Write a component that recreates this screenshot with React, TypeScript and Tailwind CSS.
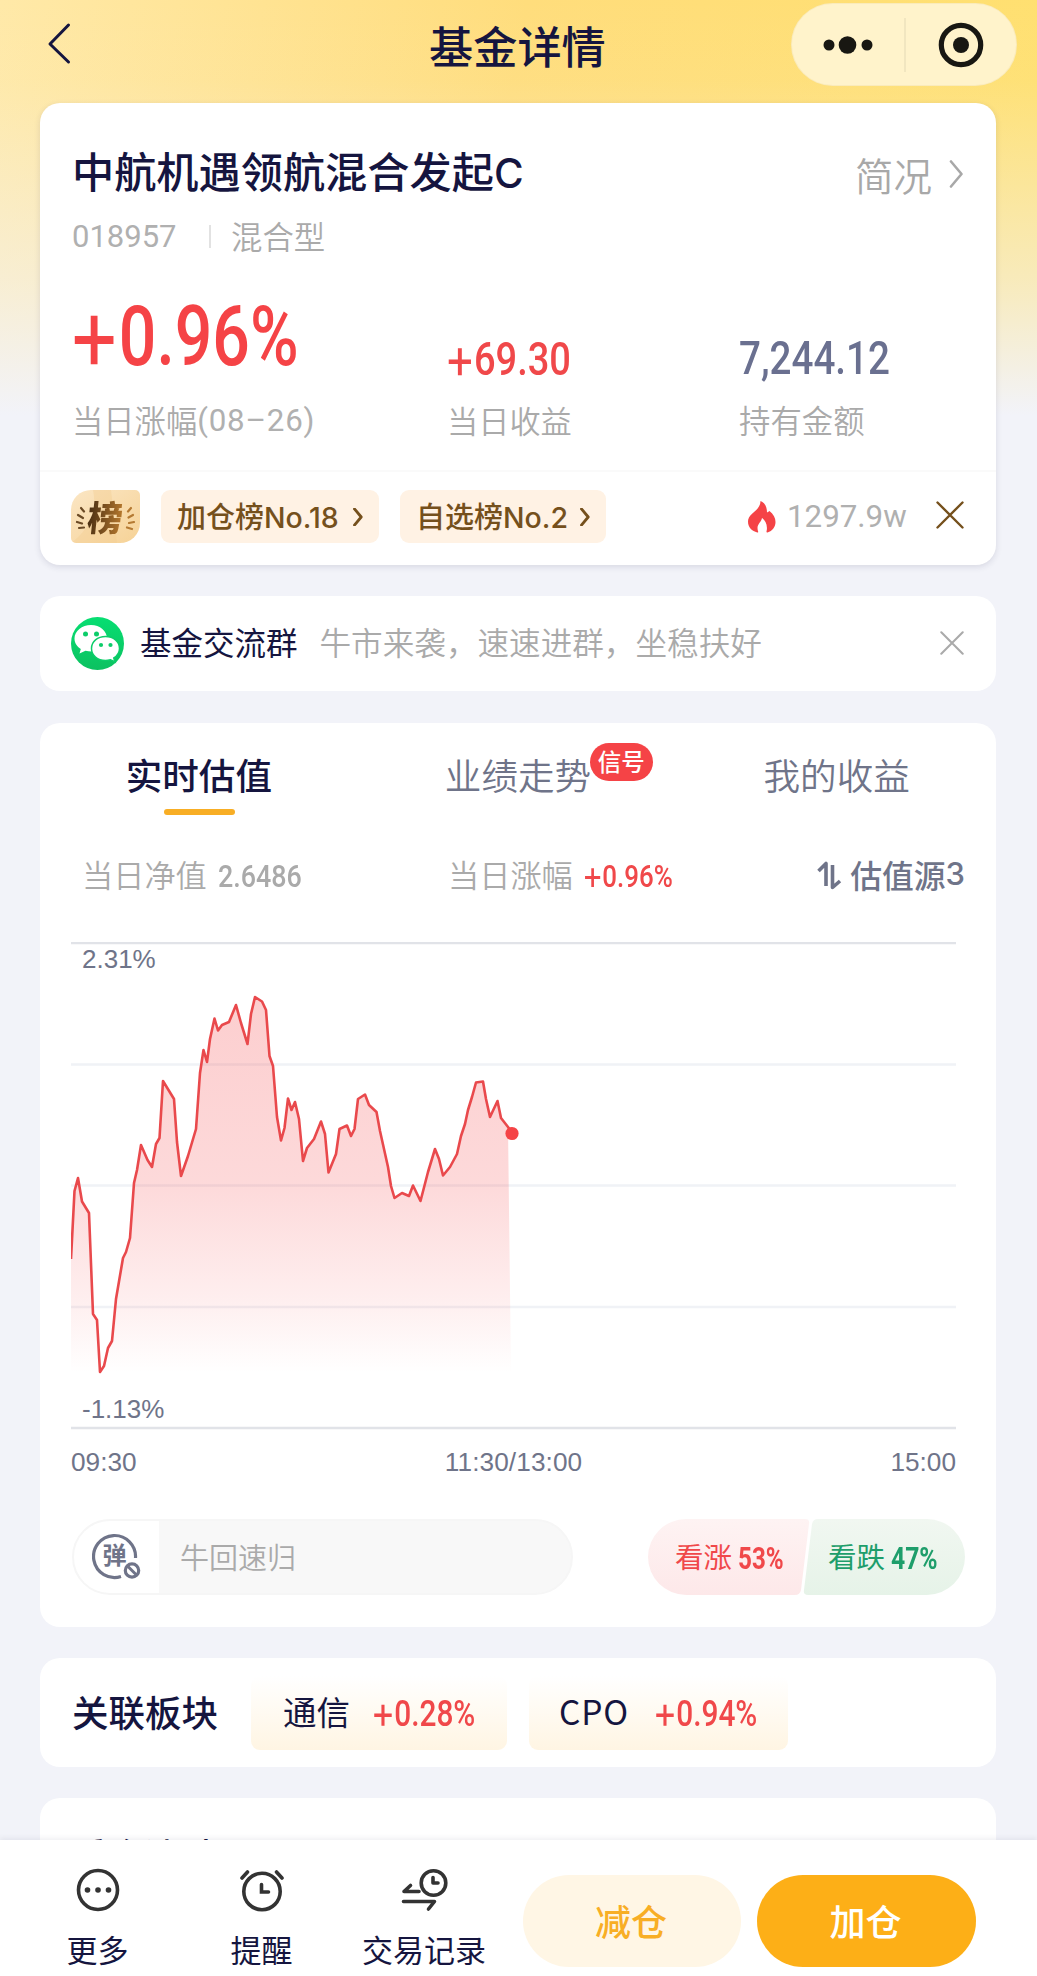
import React from "react";

const CJK = "font-['Noto_Sans_CJK_SC',sans-serif]";

const points: [number, number][] = [
  [0, 316], [3.5, 248], [7, 235], [11, 258.5], [18, 270], [22, 371], [26, 377], [29, 429], [33, 423], [37, 405],
  [41, 398], [45, 356], [52, 315], [55, 309], [59, 295], [63, 240], [66, 227], [70, 202], [76.5, 217], [81, 224],
  [85, 201], [88.5, 195], [92, 138], [103, 156], [106, 199], [110, 233], [117, 213], [125, 186], [129, 130],
  [132.5, 107], [136, 119], [139, 96], [143.5, 75.5], [147, 87.5], [151, 82], [158, 79], [165, 62], [170, 80],
  [176.5, 101], [180, 71], [184, 54], [191, 58.5], [195, 67], [198.5, 113], [202, 123], [206, 174], [210, 197.5],
  [213.5, 185], [217, 155.5], [220.5, 167], [224, 159], [228, 176], [232, 218], [236, 205], [243, 196],
  [250, 178.5], [254, 191], [257.5, 229.5], [265, 211], [268.5, 186], [276, 182.5], [280, 193], [283.5, 186],
  [287, 156], [294, 151.5], [298, 162], [305.5, 169], [309, 188], [317, 224], [320, 243], [323.5, 255],
  [331, 250], [338, 253], [342, 242.5], [349.5, 258], [357, 229], [364, 206], [368, 216], [372, 232.5],
  [379, 224], [386, 211], [390, 193], [394, 181], [397, 167], [401, 154], [405, 139.5], [412, 138.5],
  [415, 156], [419, 174], [426.5, 158], [430, 175], [437, 184],
];
const line = points.map(([x, y], i) => `${i ? "L" : "M"}${x} ${y}`).join("");

function Num({ children, size, color, width, weight = "font-medium" }: { children: string; size: string; color: string; width: number; weight?: string }) {
  const ref = React.useRef<HTMLSpanElement>(null);
  const [scale, setScale] = React.useState(0.83);
  React.useLayoutEffect(() => {
    if (ref.current) setScale(width / ref.current.offsetWidth);
  }, [width]);
  const signed = children.startsWith("+");
  return (
    <span className="inline-block shrink-0" style={{ width }}>
      <span ref={ref} className={`inline-block origin-left whitespace-nowrap font-[Roboto,sans-serif] ${weight} ${size} ${color}`} style={{ transform: `scaleX(${scale})` }}>
        {signed && <span className="relative top-[0.045em] -ml-[0.06em] font-[Inter] text-[1.24em] font-normal leading-none tracking-[-0.03em]">+</span>}
        {signed ? children.slice(1) : children}
      </span>
    </span>
  );
}

function Cross({ className, width = 2.4 }: { className: string; width?: number }) {
  return (
    <svg className={className} viewBox="0 0 28 28" fill="none" stroke="currentColor" strokeWidth={width} strokeLinecap="round">
      <path d="M1.5 1.5l25 25M26.5 1.5l-25 25" />
    </svg>
  );
}

function Chevron({ className, width = 3 }: { className: string; width?: number }) {
  return (
    <svg className={className} viewBox="0 0 14 28" fill="none" stroke="currentColor" strokeWidth={width} strokeLinecap="round" strokeLinejoin="round">
      <path d="M1.5 1.5L12 14L1.5 26.5" />
    </svg>
  );
}

function Header() {
  return (
    <header className="flex h-[103px] pl-[46px]">
      <svg className="mt-[22px] h-[44px] w-[26px] text-[#15153f]" viewBox="0 0 26 44" fill="none" stroke="currentColor" strokeWidth="3" strokeLinecap="round" strokeLinejoin="round">
        <path d="M22.500 3L4 22L22.500 40" />
      </svg>
      <h1 className="ml-[357px] mt-[13px] w-[176px] whitespace-nowrap text-[44.2px] font-medium leading-[64px] text-[#15153f]">基金详情</h1>
      <div className="ml-[186px] mt-[3px] flex h-[83px] w-[226px] items-center rounded-full border border-[#f6e6b0]/60 bg-[#fff3cb]">
        <svg className="h-[60px] w-[223px]" viewBox="0 0 223 60" fill="#181712">
          <circle cx="37" cy="30" r="5.500" />
          <circle cx="55.500" cy="30" r="8.800" />
          <circle cx="75" cy="30" r="5.500" />
          <path d="M113 3v54" stroke="#ece2bd" strokeWidth="1.500" />
          <circle cx="169" cy="30" r="19.700" fill="none" stroke="#181712" strokeWidth="5.200" />
          <circle cx="169" cy="30" r="8" />
        </svg>
      </div>
    </header>
  );
}

function RankBadge() {
  return (
    <div className="relative flex h-[53px] w-[69px] items-center justify-center overflow-hidden rounded-bl-[5px] rounded-br-[20px] rounded-tl-[20px] rounded-tr-[5px] bg-gradient-to-br from-[#fbe6c4] to-[#f6d296]">
      <svg className="absolute inset-0 h-full w-full" viewBox="0 0 69 53" fill="none" strokeLinecap="round" strokeWidth="2.2">
        <path d="M22 0h18L46 53H0C16 42 27 22 22 0z" fill="#f3cd90" opacity=".4" />
        <path d="M10 18l3 3.500M7 25l5 3M6 32l5 1.500M8 38l5-.5" stroke="#6b4a25" />
        <path d="M60 18l-3 3.500M62 25l-4.500 2.500M63 32l-5 1M61 39l-5-1.500" stroke="#b57a33" />
      </svg>
      <span className="relative -mt-[3px] -skew-x-6 bg-gradient-to-r from-[#4a2f12] to-[#b87a2e] bg-clip-text text-[35px] font-black leading-[53px] text-transparent">榜</span>
    </div>
  );
}

function RankChip({ label, no, className }: { label: string; no: string; className: string }) {
  return (
    <div className={`flex h-[53px] items-center rounded-[9px] bg-[#fff2e4] pl-4 text-[#75501c] ${className}`}>
      <span className="-mt-[1px] whitespace-nowrap text-[29px] font-medium leading-[53px]">
        {label}
        <span className="font-[Inter] text-[28.500px]">{no}</span>
      </span>
      <Chevron className="ml-auto h-[18px] w-[12px]" width={4.4} />
    </div>
  );
}

function FundCard() {
  return (
    <section className="h-[462px] rounded-[20px] bg-white shadow-[0_2px_6px_rgba(40,40,80,0.13)]">
      <div className="flex h-[367px] flex-col pl-[32px] pr-[32px]">
        <div className="mt-[39px] flex h-[60px] items-center justify-between">
          <h2 className="whitespace-nowrap text-[42.200px] font-medium leading-[60px] text-[#15153f]">中航机遇领航混合发起<span className="font-[Inter] text-[40.500px]">C</span></h2>
          <div className="mt-[4px] flex items-center text-[#a8a8a8]">
            <span className="text-[38.500px] font-[350] leading-[60px]">简况</span>
            <Chevron className="ml-[17px] h-[28px] w-[15px]" width={2.600} />
          </div>
        </div>
        <div className="mt-[10px] flex h-[48px] items-center text-[#aaaaaa]">
          <span className="mt-[2px] w-[105px] font-[Roboto] text-[31px] leading-[48px] text-[#b0b0b0]">018957</span>
          <span className="ml-[32px] h-[23px] w-[2px] bg-[#e2e2e2]" />
          <span className="ml-[20px] text-[31.400px] font-[350] leading-[48px]">混合型</span>
        </div>
        <div className="flex h-[210px]">
          <div className="w-[375px] pt-[20px]">
            <div className="flex h-[106px] items-center"><Num size="text-[83px] leading-[106px]" color="text-[#f54346]" width={227}>+0.96%</Num></div>
            <div className="mt-[10px] flex whitespace-nowrap text-[31.300px] font-[350] leading-[48px] text-[#aaaaaa]">当日涨幅<span className="mt-[1px] font-[Roboto] font-normal tracking-[0.8px] text-[#b0b0b0]">(08–26)</span></div>
          </div>
          <div className="w-[292px] pt-[67px]">
            <div className="flex h-[62px] items-center"><Num size="text-[46px] leading-[62px]" color="text-[#f0484a]" width={124}>+69.30</Num></div>
            <div className="mt-[7px] text-[31.200px] font-[350] leading-[48px] text-[#aaaaaa]">当日收益</div>
          </div>
          <div className="pt-[67px]">
            <div className="flex h-[62px] items-center"><Num size="text-[46px] leading-[62px]" color="text-[#6a7090]" width={151}>7,244.12</Num></div>
            <div className="mt-[7px] text-[31.400px] font-[350] leading-[48px] text-[#aaaaaa]">持有金额</div>
          </div>
        </div>
      </div>
      <div className="flex h-[95px] border-t-2 border-[#fafafa] pl-[31px] pr-[32px] pt-[18px]">
        <RankBadge />
        <RankChip label="加仓榜" no="No.18" className="ml-[21px] w-[218px] pr-[15px]" />
        <RankChip label="自选榜" no="No.2" className="ml-[21px] w-[206px] pr-[15px]" />
        <div className="ml-auto flex h-[53px] items-center">
          <svg className="h-[32px] w-[28px]" viewBox="0 0 28 32">
            <path d="M12.500 0c5 2 6.500 7 6.500 11.500 1-.3 1.800-1 2.500-1.500 4 3 6 7 6 11 0 5-3 9-8 10.500-.8.2-1.200-.3-1-1 1.500-6-1-11-4.500-13.500-.5 3.500-4.500 6-4.500 10 0 1.500.3 2.800.7 3.700.3.7-.2 1-.9.8C4 30 0 26.500 0 20.500 0 12 12.500 10 12.500 0z" fill="#f54346" />
          </svg>
          <span className="ml-[11px] mt-[2px] w-[120px] whitespace-nowrap font-[Roboto] text-[31.300px] text-[#b0b0b0]">1297.9w</span>
          <Cross className="-mt-[4px] ml-[29px] h-[28px] w-[28px] text-[#75501c]" />
        </div>
      </div>
    </section>
  );
}

function GroupCard() {
  return (
    <section className="mt-[31px] flex h-[95px] items-center rounded-[20px] bg-white pl-[31px] pr-[32px]">
      <svg className="h-[53px] w-[53px]" viewBox="0 0 53 53">
        <defs>
          <linearGradient id="wx" x1="0" y1="0" x2="0" y2="1"><stop stopColor="#07de72" /><stop offset="1" stopColor="#0cc160" /></linearGradient>
        </defs>
        <circle cx="26.500" cy="26.500" r="26.500" fill="url(#wx)" />
        <path d="M20 8C11 8 3.500 14 3.500 21.500c0 4.500 2.500 8 6.300 10.500L8.500 36.500l6-2.800c2 .6 4 .8 6 .8 9 0 15.500-5.700 15.500-13S29 8 20 8z" fill="#fff" />
        <path d="M34.500 19.500c-8 0-14 5-14 12s6 12 14 12c1.800 0 3.300-.3 5-.8l4.500 2.300-1.200-4c3.500-2.200 5.700-5.600 5.700-9.500 0-7-6-12-14-12z" fill="#fff" stroke="#0ccd69" strokeWidth="1.500" />
        <g fill="#0ccd69"><circle cx="14.500" cy="17" r="2.500" /><circle cx="25.500" cy="17" r="2.500" /><circle cx="30" cy="28" r="2.100" /><circle cx="39.500" cy="28" r="2.100" /></g>
      </svg>
      <span className="-mt-[5px] ml-[16px] whitespace-nowrap text-[31.500px] leading-[48px] text-[#15153f]">基金交流群</span>
      <span className="-mt-[5px] ml-[22px] whitespace-nowrap text-[31.600px] font-[350] leading-[48px] text-[#aaaaaa]">牛市来袭，速速进群，坐稳扶好</span>
      <Cross className="-mt-[1px] ml-auto h-[24px] w-[24px] text-[#aaaaaa]" />
    </section>
  );
}

function Tabs() {
  return (
    <nav className="grid h-[106px] grid-cols-3 text-center text-[36.600px] leading-[54px] text-[#6f7489]">
      <div className="flex flex-col items-center pt-[25px] font-medium text-[#15153f]">
        <span className="-ml-[1px]">实时估值</span>
        <span className="mt-[7px] h-[6px] w-[71px] rounded-full bg-[#f8ae25]" />
      </div>
      <div className="pt-[25px] font-[350]">
        <span className="relative">
          业绩走势
          <span className="absolute -top-[5px] left-[145px] h-[38px] w-[63px] rounded-full bg-[#f54346] text-center text-[23.500px] font-medium leading-[36px] text-white">信号</span>
        </span>
      </div>
      <div className="pt-[25px] font-[350]">我的收益</div>
    </nav>
  );
}

function Chart() {
  return (
    <div className="ml-[31px] mt-[2px]">
      <div className="relative h-[488px] w-[885px]">
        <svg className="h-[488px] w-[895px]" viewBox="0 -1 895 488" fill="none">
          <defs>
            <linearGradient id="fill" x1="0" y1="54" x2="0" y2="430" gradientUnits="userSpaceOnUse">
              <stop stopColor="#f54346" stopOpacity=".26" /><stop offset=".5" stopColor="#f54346" stopOpacity=".2" /><stop offset=".8" stopColor="#f54346" stopOpacity=".09" /><stop offset="1" stopColor="#f54346" stopOpacity="0" />
            </linearGradient>
          </defs>
          <path d="M0 0h885M0 485h885" stroke="#e1e3e8" strokeWidth="2.400" />
          <path d="M0 121.500h885M0 242.500h885M0 364h885" stroke="#f0f2f6" strokeWidth="2.400" />
          <path d={`${line}L440 430L0 430Z`} fill="url(#fill)" />
          <path d={`${line}L441 190`} stroke="#e9494c" strokeWidth="2.600" strokeLinejoin="round" />
          <circle cx="441" cy="190.500" r="6.600" fill="#f54346" />
        </svg>
        <span className="absolute left-[11px] top-[2px] font-['Liberation_Sans'] text-[26px] leading-[30px] text-[#6f7489]">2.31%</span>
        <span className="absolute left-[11px] top-[452px] font-['Liberation_Sans'] text-[26px] leading-[30px] text-[#6f7489]">-1.13%</span>
      </div>
      <div className="mt-[17px] flex w-[885px] justify-between font-['Liberation_Sans'] text-[26.200px] leading-[30px] text-[#6f7489]">
        <span>09:30</span><span className="tracking-[0.1px]">11:30/13:00</span><span>15:00</span>
      </div>
    </div>
  );
}

function ValuationCard() {
  return (
    <section className="mt-[32px] h-[904px] rounded-[20px] bg-white">
      <Tabs />
      <div className="flex h-[111px] items-center whitespace-nowrap pl-[42px] pr-[31px] text-[31.200px] font-[350] leading-[48px] text-[#aaaaaa]">
        <div className="flex w-[366px] items-center pb-[22px]">当日净值<span className="ml-[11px] pt-[1px]"><Num size="text-[32px] leading-[44px]" color="text-[#aaaaaa]" width={84}>2.6486</Num></span></div>
        <div className="flex items-center pb-[22px]">当日涨幅<span className="ml-[11px] pt-[1px]"><Num size="text-[32px] leading-[44px]" color="text-[#f0484a]" width={89}>+0.96%</Num></span></div>
        <div className="ml-auto flex items-center pb-[22px] text-[31.800px] font-medium text-[#6f7489]">
          <svg className="mr-[7px] mt-[3px] h-[32px] w-[26px]" viewBox="0 0 26 32" fill="none" stroke="currentColor" strokeWidth="3.600" strokeLinejoin="round">
            <path d="M1.500 12L9 4.500V27" /><path d="M15.500 6V28.500L23 22" />
          </svg>
          估值源<span className="font-[Inter] text-[31px]">3</span>
        </div>
      </div>
      <Chart />
      <div className="mt-[42px] flex h-[76px] justify-between pl-[32px] pr-[31px]">
        <div className="flex w-[501px] overflow-hidden rounded-full border-2 border-[#f6f6f6] bg-[#f8f8f8]">
          <div className="flex w-[85px] items-center bg-white pl-[18px]">
            <svg className="h-[50px] w-[52px]" viewBox="0 0 52 50" fill="none" stroke="#6f7489">
              <path d="M43.500 26A21 21 0 1 0 29 44.500" strokeWidth="3.200" />
              <circle cx="40" cy="38.500" r="6.700" strokeWidth="3.200" />
              <path d="M35.500 34l9 9" strokeWidth="3" />
              <text x="22.500" y="32" textAnchor="middle" fontSize="24" fontWeight="700" fill="#6f7489" stroke="none">弹</text>
            </svg>
          </div>
          <span className="-mt-[1px] ml-[21px] text-[29px] font-[350] leading-[72px] text-[#aaaaaa]">牛回速归</span>
        </div>
        <div className="flex w-[317px]">
          <div className="flex h-[76px] w-[162px] items-center bg-gradient-to-b from-[#fef3f3] to-[#fde8e9] pl-[27px] text-[28.500px] text-[#f0484a] [clip-path:path('M38_0H157Q162_0_161_5L153_71Q152_76_147_76H38A38_38_0_0_1_38_0Z')]">
            <span className="-mt-[2px]">看涨</span><span className="ml-[6px] flex"><Num size="text-[30.500px] leading-[40px]" color="text-[#f0484a]" weight="font-bold" width={46}>53%</Num></span>
          </div>
          <div className="-ml-[7px] flex h-[76px] w-[162px] items-center bg-gradient-to-b from-[#f1f7f1] to-[#e6f3e8] pl-[25px] text-[28.500px] text-[#1e9e6b] [clip-path:path('M15_0H124A38_38_0_0_1_124_76H5Q0_76_1_71L9_5Q10_0_15_0Z')]">
            <span className="-mt-[2px]">看跌</span><span className="ml-[6px] flex"><Num size="text-[30.500px] leading-[40px]" color="text-[#1e9e6b]" weight="font-bold" width={47}>47%</Num></span>
          </div>
        </div>
      </div>
    </section>
  );
}

function Sector({ name, change, className }: { name: string; change: string; className: string }) {
  return (
    <div className={`flex h-[74px] items-center rounded-[9px] bg-gradient-to-b from-white to-[#fff5e3] text-[33.500px] leading-[48px] text-[#15153f] ${className}`}>
      <span className="mb-[3px]">{name}</span>
      <span className="ml-auto flex tracking-normal"><Num size="text-[36px] leading-[48px]" color="text-[#f0484a]" width={102}>{change}</Num></span>
    </div>
  );
}

function BottomBar() {
  return (
    <footer className="relative flex h-[136px] bg-white text-[31px] leading-[44px] text-[#15153f] shadow-[0_-2px_5px_rgba(60,60,90,0.08)]">
      <div className="flex w-[195px] flex-col items-center pt-[28px]">
        <svg className="h-[44px] w-[44px]" viewBox="0 0 44 44"><circle cx="22" cy="22" r="19.500" fill="none" stroke="#333" strokeWidth="3.600" /><g fill="#333"><circle cx="11.500" cy="22" r="2.800" /><circle cx="22" cy="22" r="2.800" /><circle cx="32.500" cy="22" r="2.800" /></g></svg>
        <span className="mt-[15px]">更多</span>
      </div>
      <div className="flex w-[133px] flex-col items-center pt-[28px]">
        <svg className="h-[44px] w-[44px]" viewBox="0 0 44 44" fill="none" stroke="#333" strokeWidth="3.600" strokeLinecap="round"><circle cx="22" cy="23.500" r="18.200" /><path d="M21.500 16.500V24h7M2 10L7.500 4M36.500 4l5.500 6" /></svg>
        <span className="mt-[15px]">提醒</span>
      </div>
      <div className="flex w-[192px] flex-col items-center pt-[28px]">
        <svg className="h-[44px] w-[48px]" viewBox="0 0 48 44" fill="none" stroke="#333" strokeWidth="3.600" strokeLinecap="round" strokeLinejoin="round"><circle cx="33.500" cy="15" r="12.300" /><path d="M33 9.500v5.500h5M19 23.500H4l6.500-6M3.500 33.500h31l-6 7.500" /></svg>
        <span className="mt-[15px] whitespace-nowrap">交易记录</span>
      </div>
      <div className="ml-[3px] mt-[35px] h-[92px] w-[218px] rounded-full bg-[#fff6e5] pr-[2px] text-center text-[36px] font-medium leading-[90px] text-[#f8ae25]">减仓</div>
      <div className="ml-[16px] mt-[35px] h-[92px] w-[219px] rounded-full bg-[#fdaf17] pr-[2px] text-center text-[36px] font-medium leading-[90px] text-white">加仓</div>
    </footer>
  );
}

export default function App() {
  return (
    <div className={`flex h-[1976px] w-[1037px] flex-col overflow-hidden bg-[#f2f3f9] ${CJK}`}>
      <div className="h-[1840px] overflow-hidden bg-[linear-gradient(to_bottom,rgba(242,243,249,0)_0px,rgba(242,243,249,0.05)_80px,rgba(242,243,249,0.55)_280px,rgba(242,243,249,1)_415px),linear-gradient(100deg,#ffe9a8_0px,#ffdd7c_520px,#ffe070_1037px)]">
        <Header />
        <main className="pl-[40px] pr-[41px]">
          <FundCard />
          <GroupCard />
          <ValuationCard />
          <section className="mt-[31px] flex h-[109px] items-center rounded-[20px] bg-white pl-[32px]">
            <h3 className="-mt-[2px] w-[179px] text-[36.500px] font-medium leading-[54px] text-[#15153f]">关联板块</h3>
            <Sector name="通信" change="+0.28%" className="w-[256px] pl-[32px] pr-[32px]" />
            <Sector name="CPO" change="+0.94%" className="ml-[22px] w-[259px] pl-[30px] pr-[31px] tracking-[0.8px]" />
          </section>
          <section className="mt-[31px] h-[100px] rounded-t-[20px] bg-white pl-[32px] pt-[29px]">
            <h3 className="text-[36.300px] font-medium leading-[54px] text-[#15153f]">重仓涨跌</h3>
          </section>
        </main>
      </div>
      <BottomBar />
    </div>
  );
}
